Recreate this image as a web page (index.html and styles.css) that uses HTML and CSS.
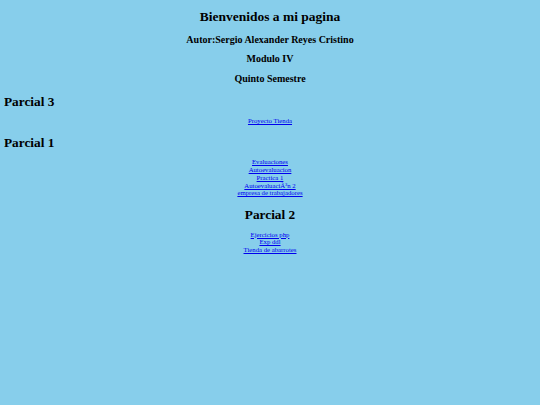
FILE: index.html
```html
<!DOCTYPE html>
<html lang="es">
<head>
<meta charset="utf-8">
<title>Bienvenidos</title>
<link rel="stylesheet" href="styles.css">
</head>
<body>
<header class="intro">
  <h1 class="title">Bienvenidos a mi pagina</h1>
  <h3 class="info first">Autor:Sergio Alexander Reyes Cristino</h3>
  <h3 class="info">Modulo IV</h3>
  <h3 class="info">Quinto Semestre</h3>
</header>
<h2 class="section top">Parcial 3</h2>
<div class="links">
  <a href="#">Proyecto Tienda</a>
</div>
<h2 class="section">Parcial 1</h2>
<div class="links">
  <a href="#">Evaluaciones</a><br>
  <a href="#">Autoevaluacion</a><br>
  <a href="#">Practica 1</a><br>
  <a href="#">AutoevaluaciÃ³n 2</a><br>
  <a href="#">empresa de trabajadores</a>
</div>
<h2 class="section centered">Parcial 2</h2>
<div class="links">
  <a href="#">Ejercicios php</a><br>
  <a href="#">Exp ddl</a><br>
  <a href="#">Tienda de abarrotes</a>
</div>
</body>
</html>
```
FILE: styles.css
```css
html {
  background: #87ceeb;
}
body {
  margin: 4px;
  font-family: "Liberation Serif", "Times New Roman", serif;
  color: #000;
}
.intro {
  text-align: center;
}
.title {
  font-size: 13.5px;
  line-height: 15.5px;
  margin: 4.9px 0 9.2px;
  font-weight: bold;
}
.info {
  font-size: 10px;
  line-height: 11.5px;
  margin: 8px 0;
  font-weight: bold;
}
.info.first {
  margin-top: 9.2px;
}
.section {
  font-size: 13.3px;
  line-height: 15.2px;
  margin: 10px 0 8.2px;
  font-weight: bold;
}
.section.top {
  margin-top: 9.8px;
}
.centered {
  text-align: center;
}
.links {
  text-align: center;
  font-size: 6.75px;
  line-height: 7.75px;
  margin: 8.2px 0;
}
.links a {
  color: #0000ee;
}
```
